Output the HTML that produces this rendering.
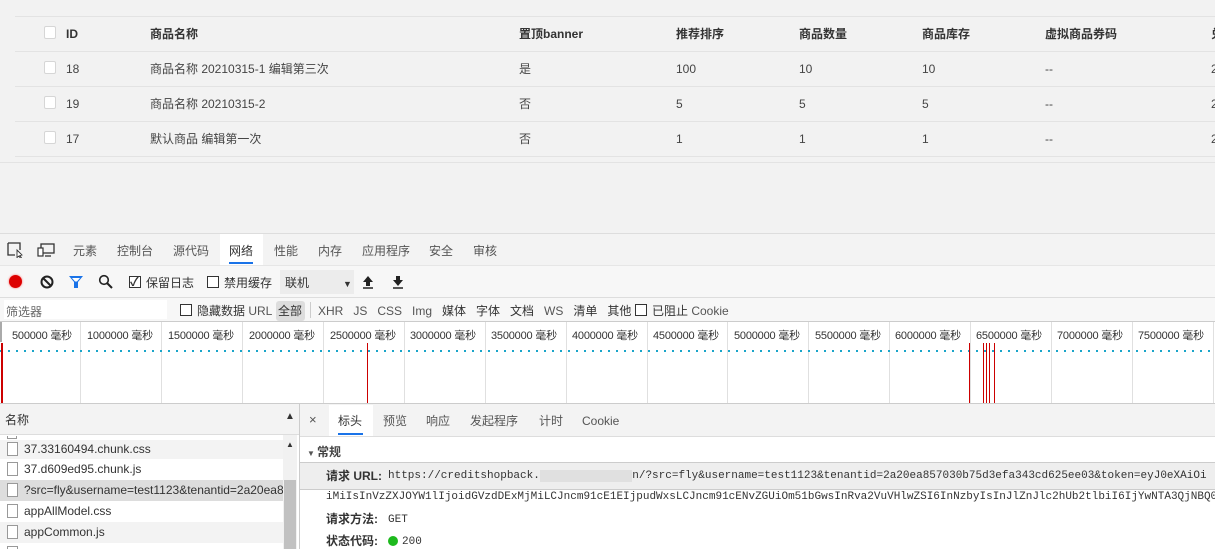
<!DOCTYPE html>
<html><head><meta charset="utf-8"><style>
*{margin:0;padding:0;box-sizing:border-box}
body{width:1215px;height:549px;overflow:hidden;position:relative;background:#fff;font-family:"Liberation Sans","Noto Sans CJK SC",sans-serif;font-size:12px;color:#333;line-height:14px}
.abs{position:absolute;white-space:nowrap;line-height:14px}
.top{position:absolute;left:0;top:0;width:1215px;height:234px;background:#f2f2f2}
.hl{position:absolute;left:15px;width:1200px;height:1px;background:#e3e3e3}
.cb{position:absolute;width:12px;height:13px;border:1px solid #d6d6d6;border-radius:2px;background:#fff}
.th{font-weight:bold;color:#333;font-size:12px}
.td{color:#444;font-size:12px}
.dt{font-size:12px;color:#333}
.ck{position:absolute;width:12px;height:12px;border:1px solid #333;background:#fff}
.vl{position:absolute;width:1px;background:#e0e0e0;top:322px;height:81px}
.rl{position:absolute;width:1px;background:#c00;top:343px;height:60px}
.tl{font-size:11px;letter-spacing:-0.2px}
.mono{font-family:"Liberation Mono","DejaVu Sans Mono",monospace;font-size:11px}
</style></head><body>
<div class="top">
<div class="hl" style="top:16px"></div>
<div class="hl" style="top:51px"></div>
<div class="hl" style="top:86px"></div>
<div class="hl" style="top:121px"></div>
<div class="hl" style="top:156px"></div>
<div class="abs" style="left:0;top:162px;width:1215px;height:1px;background:#e3e3e3"></div>
<div class="cb" style="left:44px;top:26px"></div>
<div class="cb" style="left:44px;top:61px"></div>
<div class="cb" style="left:44px;top:96px"></div>
<div class="cb" style="left:44px;top:131px"></div>
<div class="abs th" style="left:66px;top:27px">ID</div>
<div class="abs th" style="left:150px;top:27px">商品名称</div>
<div class="abs th" style="left:519px;top:27px">置顶banner</div>
<div class="abs th" style="left:676px;top:27px">推荐排序</div>
<div class="abs th" style="left:799px;top:27px">商品数量</div>
<div class="abs th" style="left:922px;top:27px">商品库存</div>
<div class="abs th" style="left:1045px;top:27px">虚拟商品券码</div>
<div class="abs th" style="left:1211px;top:27px">兑</div>
<div class="abs td" style="left:66px;top:62px">18</div><div class="abs td" style="left:150px;top:62px">商品名称 20210315-1 编辑第三次</div><div class="abs td" style="left:519px;top:62px">是</div><div class="abs td" style="left:676px;top:62px">100</div><div class="abs td" style="left:799px;top:62px">10</div><div class="abs td" style="left:922px;top:62px">10</div><div class="abs td" style="left:1045px;top:62px">--</div><div class="abs td" style="left:1211px;top:62px">2</div>
<div class="abs td" style="left:66px;top:97px">19</div><div class="abs td" style="left:150px;top:97px">商品名称 20210315-2</div><div class="abs td" style="left:519px;top:97px">否</div><div class="abs td" style="left:676px;top:97px">5</div><div class="abs td" style="left:799px;top:97px">5</div><div class="abs td" style="left:922px;top:97px">5</div><div class="abs td" style="left:1045px;top:97px">--</div><div class="abs td" style="left:1211px;top:97px">2</div>
<div class="abs td" style="left:66px;top:132px">17</div><div class="abs td" style="left:150px;top:132px">默认商品 编辑第一次</div><div class="abs td" style="left:519px;top:132px">否</div><div class="abs td" style="left:676px;top:132px">1</div><div class="abs td" style="left:799px;top:132px">1</div><div class="abs td" style="left:922px;top:132px">1</div><div class="abs td" style="left:1045px;top:132px">--</div><div class="abs td" style="left:1211px;top:132px">2</div>
</div>
<!-- devtools tab bar -->
<div class="abs" style="left:0;top:233px;width:1215px;height:33px;background:#f3f3f3;border-top:1px solid #ddd;border-bottom:1px solid #e6e6e6"></div>
<svg class="abs" style="left:7px;top:242px" width="18" height="16"><path d="M1 1h12v7M1 1v12h7" fill="none" stroke="#333" stroke-width="1.3"/><path d="M10 8l5 5-2 .5 1.5 2.5-1 .5-1.5-2.5-2 1.5z" fill="#fff" stroke="#333" stroke-width="0.9"/></svg>
<svg class="abs" style="left:37px;top:243px" width="18" height="14"><rect x="4" y="1" width="13" height="9" fill="none" stroke="#333" stroke-width="1.3"/><rect x="1" y="5" width="5" height="8" fill="#fff" stroke="#333" stroke-width="1.2"/><path d="M8 13h6" stroke="#333" stroke-width="1.3"/></svg>
<div class="abs" style="left:220px;top:234px;width:43px;height:31px;background:#fff"></div>
<div class="abs" style="left:229px;top:262px;width:24px;height:2px;background:#1a73e8"></div>
<div class="abs dt" style="left:73px;top:244px;color:#555">元素</div>
<div class="abs dt" style="left:117px;top:244px;color:#555">控制台</div>
<div class="abs dt" style="left:173px;top:244px;color:#555">源代码</div>
<div class="abs dt" style="left:229px;top:244px">网络</div>
<div class="abs dt" style="left:274px;top:244px;color:#555">性能</div>
<div class="abs dt" style="left:318px;top:244px;color:#555">内存</div>
<div class="abs dt" style="left:362px;top:244px;color:#555">应用程序</div>
<div class="abs dt" style="left:429px;top:244px;color:#555">安全</div>
<div class="abs dt" style="left:473px;top:244px;color:#555">审核</div>
<!-- toolbar -->
<div class="abs" style="left:0;top:266px;width:1215px;height:32px;background:#f7f7f7;border-bottom:1px solid #ddd"></div>
<div class="abs" style="left:9px;top:275px;width:13px;height:13px;border-radius:50%;background:#d00;box-shadow:0 0 2px #f66"></div>
<svg class="abs" style="left:40px;top:275px" width="14" height="14"><circle cx="7" cy="7" r="5.5" fill="none" stroke="#222" stroke-width="2"/><path d="M3 3l8 8" stroke="#222" stroke-width="2"/></svg>
<svg class="abs" style="left:68px;top:275px" width="16" height="14"><path d="M1 1h14l-5 6v6H6V7z" fill="#1a73e8"/><path d="M4 3h8l-3 3.5H7z" fill="#fff"/></svg>
<svg class="abs" style="left:98px;top:274px" width="16" height="16"><circle cx="6" cy="6" r="4.3" fill="none" stroke="#222" stroke-width="1.6"/><path d="M9 9l5 5" stroke="#222" stroke-width="2"/></svg>
<div class="ck" style="left:129px;top:276px"></div><div class="abs" style="left:130px;top:275px;font-size:12px;font-weight:bold">✓</div>
<div class="abs dt" style="left:146px;top:276px">保留日志</div>
<div class="ck" style="left:207px;top:276px"></div>
<div class="abs dt" style="left:224px;top:276px">禁用缓存</div>
<div class="abs" style="left:280px;top:270px;width:74px;height:24px;background:#ececec"></div>
<div class="abs dt" style="left:285px;top:276px">联机</div>
<div class="abs" style="left:343px;top:277px;font-size:9px">▼</div>
<svg class="abs" style="left:362px;top:275px" width="12" height="14"><path d="M6 1l5 6H8v4H4V7H1z" fill="#222"/><path d="M1 13h10" stroke="#222" stroke-width="1.5"/></svg>
<svg class="abs" style="left:392px;top:275px" width="12" height="14"><path d="M6 11l5-6H8V1H4v4H1z" fill="#222"/><path d="M1 13h10" stroke="#222" stroke-width="1.5"/></svg>
<!-- filter row -->
<div class="abs" style="left:0;top:298px;width:1215px;height:24px;background:#f7f7f7;border-bottom:1px solid #ccc"></div>
<div class="abs" style="left:4px;top:300px;width:163px;height:19px;background:#fff"></div>
<div class="abs dt" style="left:6px;top:305px;color:#666">筛选器</div>
<div class="ck" style="left:180px;top:304px"></div>
<div class="abs dt" style="left:197px;top:304px">隐藏数据 <span style="color:#555">URL</span></div>
<div class="abs" style="left:276px;top:301px;width:29px;height:20px;background:#ddd;border-radius:3px"></div>
<div class="abs dt" style="left:278px;top:304px">全部</div>
<div class="abs" style="left:310px;top:302px;width:1px;height:16px;background:#ccc"></div>
<div class="abs dt" style="left:318px;top:304px;color:#555">XHR&nbsp;&nbsp; JS&nbsp;&nbsp; CSS&nbsp;&nbsp; Img&nbsp;&nbsp; <span style="color:#333">媒体&nbsp;&nbsp; 字体&nbsp;&nbsp; 文档</span>&nbsp;&nbsp; WS&nbsp;&nbsp; <span style="color:#333">清单&nbsp;&nbsp; 其他</span></div>
<div class="ck" style="left:635px;top:304px"></div>
<div class="abs dt" style="left:652px;top:304px">已阻止 <span style="color:#555">Cookie</span></div>
<!-- timeline -->
<div class="abs" style="left:0;top:322px;width:2px;height:20px;background:#aaa"></div>
<div class="vl" style="left:80px"></div><div class="vl" style="left:161px"></div><div class="vl" style="left:242px"></div><div class="vl" style="left:323px"></div><div class="vl" style="left:404px"></div><div class="vl" style="left:485px"></div><div class="vl" style="left:566px"></div><div class="vl" style="left:647px"></div><div class="vl" style="left:727px"></div><div class="vl" style="left:808px"></div><div class="vl" style="left:889px"></div><div class="vl" style="left:970px"></div><div class="vl" style="left:1051px"></div><div class="vl" style="left:1132px"></div><div class="vl" style="left:1213px"></div>
<div class="abs dt tl" style="left:12px;top:329px">500000 毫秒</div>
<div class="abs dt tl" style="left:87px;top:329px">1000000 毫秒</div>
<div class="abs dt tl" style="left:168px;top:329px">1500000 毫秒</div>
<div class="abs dt tl" style="left:249px;top:329px">2000000 毫秒</div>
<div class="abs dt tl" style="left:330px;top:329px">2500000 毫秒</div>
<div class="abs dt tl" style="left:410px;top:329px">3000000 毫秒</div>
<div class="abs dt tl" style="left:491px;top:329px">3500000 毫秒</div>
<div class="abs dt tl" style="left:572px;top:329px">4000000 毫秒</div>
<div class="abs dt tl" style="left:653px;top:329px">4500000 毫秒</div>
<div class="abs dt tl" style="left:734px;top:329px">5000000 毫秒</div>
<div class="abs dt tl" style="left:815px;top:329px">5500000 毫秒</div>
<div class="abs dt tl" style="left:895px;top:329px">6000000 毫秒</div>
<div class="abs dt tl" style="left:976px;top:329px">6500000 毫秒</div>
<div class="abs dt tl" style="left:1057px;top:329px">7000000 毫秒</div>
<div class="abs dt tl" style="left:1138px;top:329px">7500000 毫秒</div>
<div class="abs" style="left:0;top:350px;width:1215px;height:2px;background:repeating-linear-gradient(90deg,#1aa5c9 0 2px,transparent 2px 8px)"></div>
<div class="rl" style="left:1px;width:2px"></div><div class="rl" style="left:367px"></div>
<div class="rl" style="left:969px"></div><div class="rl" style="left:983px"></div><div class="rl" style="left:986px"></div><div class="rl" style="left:989px"></div><div class="rl" style="left:994px"></div>
<div class="abs" style="left:0;top:403px;width:1215px;height:1px;background:#ccc"></div>
<!-- left list -->
<div class="abs" style="left:0;top:404px;width:299px;height:31px;background:#f3f3f3;border-bottom:1px solid #ddd"></div>
<div class="abs dt" style="left:5px;top:413px">名称</div>
<div class="abs" style="left:285px;top:410px;font-size:10px">▲</div>
<div class="abs" style="left:0;top:440px;width:283px;height:19px;background:#f3f3f3"></div>
<div class="abs" style="left:0;top:480px;width:283px;height:21px;background:#ddd"></div>
<div class="abs" style="left:0;top:522px;width:283px;height:21px;background:#f3f3f3"></div>
<div class="abs" style="left:283px;top:435px;width:14px;height:114px;background:#f1f1f1"></div>
<div class="abs" style="left:284px;top:480px;width:12px;height:69px;background:#c1c1c1"></div>
<div class="abs" style="left:286px;top:438px;font-size:8px">▲</div>
<div class="abs" style="left:7px;top:436px;width:10px;height:3px;border:1px solid #999;border-top:none"></div>
<div class="abs" style="left:7px;top:442px;width:11px;height:14px;border:1px solid #999;background:#fff"></div>
<div class="abs" style="left:7px;top:462px;width:11px;height:14px;border:1px solid #999;background:#fff"></div>
<div class="abs" style="left:7px;top:483px;width:11px;height:14px;border:1px solid #999;background:#fff"></div>
<div class="abs" style="left:7px;top:504px;width:11px;height:14px;border:1px solid #999;background:#fff"></div>
<div class="abs" style="left:7px;top:525px;width:11px;height:14px;border:1px solid #999;background:#fff"></div>
<div class="abs" style="left:7px;top:546px;width:11px;height:3px;border:1px solid #999;border-bottom:none"></div>
<div class="abs dt" style="left:24px;top:442px">37.33160494.chunk.css</div>
<div class="abs dt" style="left:24px;top:462px">37.d609ed95.chunk.js</div>
<div class="abs dt" style="left:24px;top:483px;width:259px;overflow:hidden">?src=fly&amp;username=test1123&amp;tenantid=2a20ea857</div>
<div class="abs dt" style="left:24px;top:504px">appAllModel.css</div>
<div class="abs dt" style="left:24px;top:525px">appCommon.js</div>
<div class="abs" style="left:299px;top:404px;width:1px;height:145px;background:#ccc"></div>
<!-- right details -->
<div class="abs" style="left:300px;top:404px;width:915px;height:33px;background:#f3f3f3;border-bottom:1px solid #ddd"></div>
<div class="abs" style="left:309px;top:413px;font-size:13px;color:#555">×</div>
<div class="abs" style="left:329px;top:405px;width:44px;height:31px;background:#fff"></div>
<div class="abs" style="left:338px;top:433px;width:25px;height:2px;background:#1a73e8"></div>
<div class="abs dt" style="left:338px;top:414px">标头</div>
<div class="abs dt" style="left:383px;top:414px;color:#555">预览</div>
<div class="abs dt" style="left:426px;top:414px;color:#555">响应</div>
<div class="abs dt" style="left:470px;top:414px;color:#555">发起程序</div>
<div class="abs dt" style="left:539px;top:414px;color:#555">计时</div>
<div class="abs dt" style="left:582px;top:414px;color:#555">Cookie</div>
<div class="abs" style="left:307px;top:447px;font-size:8px;color:#555">▼</div>
<div class="abs dt" style="left:317px;top:445px;font-weight:bold;color:#444">常规</div>
<div class="abs" style="left:300px;top:462px;width:915px;height:28px;background:#eee;border-top:1px solid #ccc;border-bottom:1px solid #ccc"></div>
<div class="abs dt" style="left:326px;top:469px;font-weight:bold">请求 URL:</div>
<div class="abs mono" style="left:388px;top:469px;color:#333">https://creditshopback.<span style="background:#e0e0e0;color:transparent">xxxxxxxxxxxxxx</span>n/?src=fly&amp;username=test1123&amp;tenantid=2a20ea857030b75d3efa343cd625ee03&amp;token=eyJ0eXAiOi</div>
<div class="abs mono" style="left:326px;top:490px;color:#333">iMiIsInVzZXJOYW1lIjoidGVzdDExMjMiLCJncm91cE1EIjpudWxsLCJncm91cENvZGUiOm51bGwsInRva2VuVHlwZSI6InNzbyIsInJlZnJlc2hUb2tlbiI6IjYwNTA3QjNBQ0</div>
<div class="abs dt" style="left:326px;top:512px;font-weight:bold">请求方法:</div>
<div class="abs mono" style="left:388px;top:513px">GET</div>
<div class="abs dt" style="left:326px;top:534px;font-weight:bold">状态代码:</div>
<div class="abs" style="left:388px;top:536px;width:10px;height:10px;border-radius:50%;background:#1db91d"></div>
<div class="abs mono" style="left:402px;top:535px">200</div>
</body></html>
